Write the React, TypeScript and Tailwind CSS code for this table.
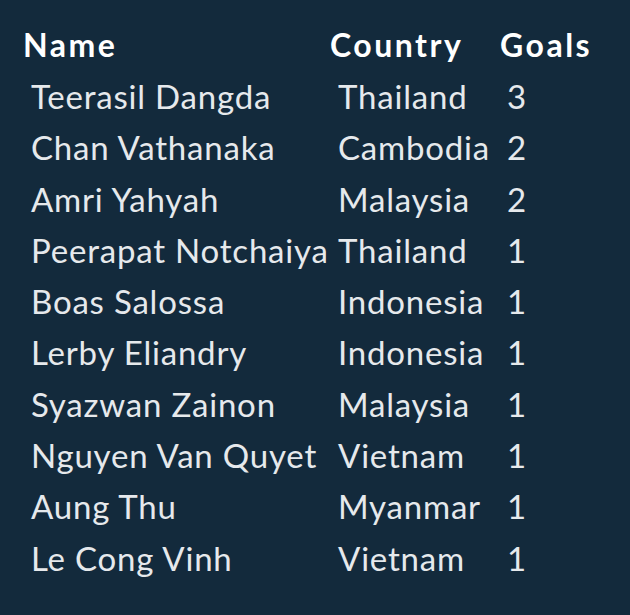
import React from "react";

const rows: [string, string, number][] = [
  ["Teerasil Dangda", "Thailand", 3],
  ["Chan Vathanaka", "Cambodia", 2],
  ["Amri Yahyah", "Malaysia", 2],
  ["Peerapat Notchaiya", "Thailand", 1],
  ["Boas Salossa", "Indonesia", 1],
  ["Lerby Eliandry", "Indonesia", 1],
  ["Syazwan Zainon", "Malaysia", 1],
  ["Nguyen Van Quyet", "Vietnam", 1],
  ["Aung Thu", "Myanmar", 1],
  ["Le Cong Vinh", "Vietnam", 1],
];

export default function App() {
  return (
    <div
      className="w-[630px] h-[615px] bg-[#132a3c] pt-[18px] pl-[23px] overflow-hidden"
      style={{ fontFamily: "Lato, 'Noto Sans', sans-serif" }}
    >
      <table className="border-collapse table-fixed w-[600px]">
        <colgroup>
          <col className="w-[307px]" />
          <col className="w-[170px]" />
          <col className="w-[123px]" />
        </colgroup>
        <thead>
          <tr className="text-white font-bold text-[32px] leading-[53px] tracking-[2.5px]">
            <th className="text-left p-0 font-bold">Name</th>
            <th className="text-left p-0 font-bold">Country</th>
            <th className="text-left p-0 font-bold">Goals</th>
          </tr>
        </thead>
        <tbody>
          {rows.map(([n, c, g]) => (
            <tr key={n} className="text-[#e6e9ec] text-[33px] leading-[51.3px] tracking-[0.8px]">
              <td className="p-0 pl-[8px] whitespace-nowrap">{n}</td>
              <td className="p-0 pl-[8px] whitespace-nowrap">{c}</td>
              <td className="p-0 pl-[7px]">{g}</td>
            </tr>
          ))}
        </tbody>
      </table>
    </div>
  );
}
